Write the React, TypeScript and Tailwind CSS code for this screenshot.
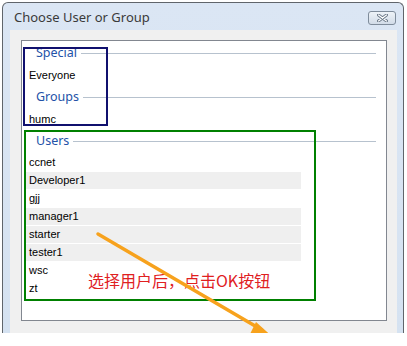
import React from "react";

const sans = { fontFamily: '"Liberation Sans", Arial, sans-serif' };

function Header({ label }: { label: string }) {
  return (
    <div className="h-[22px] flex items-center pl-[14px] pr-[10px]">
      <span className="text-[12.5px] text-[#2352a8] font-['Noto_Sans',sans-serif] leading-none">{label}</span>
      <div className="flex-1 h-px bg-[#b7c2ce] ml-[4px]" />
    </div>
  );
}

const users: { name: string; shaded: boolean }[] = [
  { name: "ccnet", shaded: false },
  { name: "Developer1", shaded: true },
  { name: "gjj", shaded: false },
  { name: "manager1", shaded: true },
  { name: "starter", shaded: true },
  { name: "tester1", shaded: true },
  { name: "wsc", shaded: false },
  { name: "zt", shaded: false },
];

export default function App() {
  return (
    <div className="w-[407px] h-[346px] bg-white relative">
      <div className="h-[333px] overflow-hidden relative">
        {/* window */}
        <div className="ml-[2px] mt-[2px] w-[402px] h-[331px] border border-b-0 border-[#60656b] rounded-t-[6px] bg-gradient-to-b from-[#dbe6f4] to-[#d5e2f1] flex flex-col">
          {/* title bar */}
          <div className="h-[27px] flex items-center justify-between pl-[11px] pr-[7px]">
            <span className="text-[13px] text-[#3a3a3a] font-['Noto_Sans',sans-serif] pt-[2px]">Choose User or Group</span>
            <button className="w-[28px] h-[14px] mt-[3px] rounded-[3px] border border-[#7f8c9b] bg-gradient-to-b from-[#eef3f8] to-[#d2dce8] flex items-center justify-center">
              <svg width="11" height="8" viewBox="0 0 11 8">
                <path d="M1.5 1 L9.5 7 M9.5 1 L1.5 7" stroke="#6a7888" strokeWidth="3" strokeLinecap="round" />
                <path d="M1.5 1 L9.5 7 M9.5 1 L1.5 7" stroke="#fff" strokeWidth="1.2" strokeLinecap="round" />
              </svg>
            </button>
          </div>

          {/* body */}
          <div className="flex-1 pl-[7px] pr-[6px]">
            <div className="h-full bg-[#f0f0f0] pt-[10px] pl-[11px] pr-[10px]">
              <div className="h-[281px] border border-[#828790] bg-white pt-[1px]" style={sans}>
                <Header label="Special" />
                <div className="h-[22px] flex items-center pl-[7px] text-[11px] text-black">Everyone</div>
                <Header label="Groups" />
                <div className="h-[22px] flex items-center pl-[7px] text-[11px] text-black">humc</div>
                <Header label="Users" />
                <div className="mt-[2px]">
                  {users.map(u => (
                    <div
                      key={u.name}
                      className={`ml-[2px] w-[277px] h-[17px] mb-[1px] flex items-center pl-[5px] text-[11px] text-black ${
                        u.shaded ? "bg-[#efefef]" : "bg-white"
                      }`}
                    >
                      {u.name}
                    </div>
                  ))}
                </div>
              </div>
            </div>
          </div>
        </div>

        {/* annotations */}
        <div className="absolute left-[23px] top-[47px] w-[85px] h-[79px] border-2 border-[#10106e]" />
        <div className="absolute left-[24px] top-[130px] w-[292px] h-[171px] border-2 border-[#008000]" />
        <div className="absolute left-[88px] top-[270px] text-[16px] leading-[20px] text-[#e0201f] font-['Noto_Sans_CJK_SC',sans-serif] whitespace-nowrap">
          选择用户后，点击OK按钮
        </div>
        <svg className="absolute left-0 top-0" width="407" height="346" viewBox="0 0 407 346">
          <line x1="98" y1="234" x2="262" y2="330" stroke="#f7a21d" strokeWidth="3.5" strokeLinecap="round" />
          <path d="M256 322 L276 340 L250 334 Z" fill="#f7a21d" />
        </svg>
      </div>
    </div>
  );
}
